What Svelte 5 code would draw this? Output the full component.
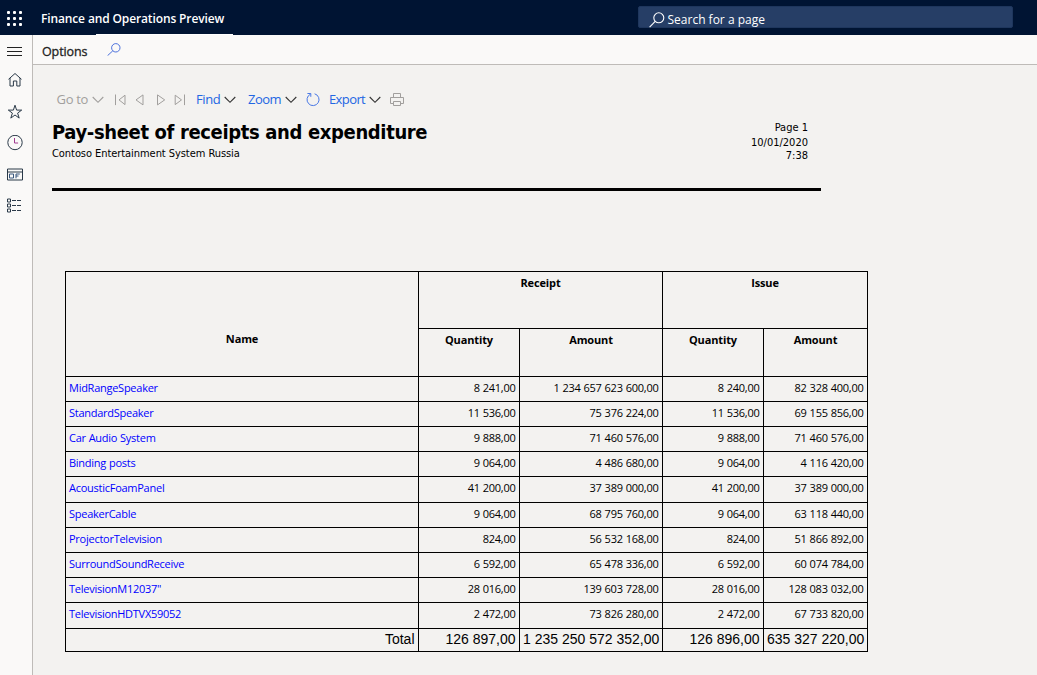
<script>
  const rows = [
    ['MidRangeSpeaker', '8 241,00', '1 234 657 623 600,00', '8 240,00', '82 328 400,00'],
    ['StandardSpeaker', '11 536,00', '75 376 224,00', '11 536,00', '69 155 856,00'],
    ['Car Audio System', '9 888,00', '71 460 576,00', '9 888,00', '71 460 576,00'],
    ['Binding posts', '9 064,00', '4 486 680,00', '9 064,00', '4 116 420,00'],
    ['AcousticFoamPanel', '41 200,00', '37 389 000,00', '41 200,00', '37 389 000,00'],
    ['SpeakerCable', '9 064,00', '68 795 760,00', '9 064,00', '63 118 440,00'],
    ['ProjectorTelevision', '824,00', '56 532 168,00', '824,00', '51 866 892,00'],
    ['SurroundSoundReceive', '6 592,00', '65 478 336,00', '6 592,00', '60 074 784,00'],
    ['TelevisionM12037"', '28 016,00', '139 603 728,00', '28 016,00', '128 083 032,00'],
    ['TelevisionHDTVX59052', '2 472,00', '73 826 280,00', '2 472,00', '67 733 820,00']
  ];
  const totals = ['Total', '126 897,00', '1 235 250 572 352,00', '126 896,00', '635 327 220,00'];
  const dots = [0, 1, 2, 3, 4, 5, 6, 7, 8];
</script>

{#snippet chevron()}
  <svg class="chev" width="12" height="8" viewBox="0 0 12 8"><path d="M.7 1 6 6.3 11.3 1" /></svg>
{/snippet}

<div class="page">
  <header>
    <svg class="waffle" width="15" height="15" viewBox="0 0 15 15">
      {#each dots as d}
        <rect x={(d % 3) * 6} y={Math.floor(d / 3) * 6} width="3" height="3" rx="1" />
      {/each}
    </svg>
    <span class="brand">Finance and Operations Preview</span>
    <div class="search">
      <svg width="16" height="16" viewBox="0 0 16 16"><circle cx="9.8" cy="5.8" r="5" /><path d="M6.2 9.4.6 15.2" /></svg>
      <span>Search for a page</span>
    </div>
  </header>
  <div class="body">
    <nav>
      <svg width="16" height="16" viewBox="0 0 16 16"><path d="M0 4.5h15M0 8.5h15M0 12.5h15" /></svg>
      <svg width="16" height="16" viewBox="0 0 16 16"><path d="M1.5 7.3 8 1.5l6.5 5.8M3 6v8h3.4V9h3.4v5H13V6" /></svg>
      <svg width="16" height="16" viewBox="0 0 16 16"><path d="m8 1.2 1.6 4.9h5.1l-4.1 3 1.6 5L8 11l-4.2 3.1 1.6-5-4.1-3h5.1z" /></svg>
      <svg width="16" height="16" viewBox="0 0 16 16"><circle cx="8" cy="7.5" r="7.2" /><path class="hand" d="M7.5 3v5h3.6" /></svg>
      <svg width="16" height="16" viewBox="0 0 16 16"><path d="M.5 2h15v11H.5zM.5 5h15" /><path class="blue" d="M2.5 7h4v4h-4zM9 11.3V7h3.8M9 9h2.5" /></svg>
      <svg width="16" height="16" viewBox="0 0 16 16"><path d="M.5 1h3v3h-3zM.5 6h3v3h-3zM.5 11h3v3h-3z" /><path stroke-dasharray="4 1" d="M5 2.5h10M5 7.5h10M5 12.5h10" /></svg>
    </nav>
    <main>
      <div class="options">
        <span>Options</span>
        <svg width="14" height="13" viewBox="0 0 14 13"><circle cx="8.8" cy="4.8" r="4.2" /><path d="M5.8 7.8.6 12.6" /></svg>
      </div>
      <div class="toolbar">
        <span class="tool off goto"><b>Go to</b>{@render chevron()}</span>
        <svg class="move first" width="12" height="12" viewBox="0 0 12 12"><path d="M.5.5v10.6M10 1.2v9.4L4 5.9z" /></svg>
        <svg class="move prev" width="10" height="12" viewBox="0 0 10 12"><path d="M8 .9v10L1 5.9z" /></svg>
        <svg class="move next" width="10" height="12" viewBox="0 0 10 12"><path d="M1.5.9v10l7.2-5z" /></svg>
        <svg class="move last" width="12" height="12" viewBox="0 0 12 12"><path d="M10.5.5v10.6M1.2 1.2v9.4l6.3-4.7z" /></svg>
        <span class="tool find"><b>Find</b>{@render chevron()}</span>
        <span class="tool zoom"><b>Zoom</b>{@render chevron()}</span>
        <svg class="refresh" width="14" height="15" viewBox="0 0 14 15"><path d="M8.6 1.8a6 6 0 1 1-4.2.4M1.4 1.5h3.4v3.3" /></svg>
        <span class="tool export"><b>Export</b>{@render chevron()}</span>
        <svg class="print" width="14" height="14" viewBox="0 0 14 14"><path d="M3.5 4.5v-4h7v4M3.5 10.5h-3v-6h13v6h-3M3.5 8.5h7v4h-7z" /></svg>
      </div>
      <section class="head">
        <div>
          <h1>Pay-sheet of receipts and expenditure</h1>
          <p>Contoso Entertainment System Russia</p>
        </div>
        <div class="meta"><span>Page 1</span><span class="date">10/01/2020</span><span>7:38</span></div>
      </section>
      <div class="grid">
        <div class="th name">Name</div>
        <div class="th wide">Receipt</div>
        <div class="th wide">Issue</div>
        <div class="th">Quantity</div>
        <div class="th">Amount</div>
        <div class="th">Quantity</div>
        <div class="th">Amount</div>
        {#each rows as r}
          <div class="td link">{r[0]}</div>
          <div class="td">{r[1]}</div>
          <div class="td">{r[2]}</div>
          <div class="td">{r[3]}</div>
          <div class="td">{r[4]}</div>
        {/each}
        {#each totals as t}
          <div class="td total">{t}</div>
        {/each}
      </div>
    </main>
  </div>
</div>

<style>
  :global(body) { background: #f3f2f1; }
  .page { width: 1037px; height: 675px; display: flex; flex-direction: column; overflow: hidden; font-family: "Open Sans", "Noto Sans", sans-serif; background: #f3f2f0; }
  .page * { box-sizing: border-box; }
  svg { flex: none; display: block; fill: none; }
  header { height: 35px; flex: none; display: flex; align-items: flex-start; background: linear-gradient(#fff, #fff) 96px 34px / 137px 1px no-repeat #001433; color: #fff; }
  .waffle { margin: 11px 0 0 7px; fill: #fff; }
  .brand { padding-left: 19px; line-height: 37px; font-size: 12px; font-weight: 600; letter-spacing: -.13px; white-space: nowrap; }
  .search { width: 375px; height: 22px; margin: 6px 24px 0 auto; border-radius: 2px; background: #263e66; border: 1px solid #1e365d; display: flex; padding-left: 10px; font-size: 12px; white-space: nowrap; }
  .search svg { margin-top: 5px; stroke: #fff; stroke-width: 1.1; }
  .search span { margin-left: 2.5px; line-height: 25px; height: 20px; }
  .body { display: flex; flex: 1; min-height: 0; }
  nav { width: 33px; flex: none; border-right: 1px solid #bebbb8; background: #faf9f8; padding: 8px 0 0 7px; display: flex; flex-direction: column; gap: 15.5px; }
  nav svg { stroke: #2b3a49; stroke-width: 1; }
  nav svg:first-child { margin-bottom: -2.5px; stroke: #222; }
  nav .hand { stroke: #a13a91; }
  nav .blue { stroke: #39577d; }
  main { flex: 1; min-width: 0; }
  .options { height: 30px; background: #faf9f8; border-bottom: 1px solid #bebbb8; display: flex; padding-left: 9px; font-size: 12.5px; color: #222; }
  .options span { width: 65px; line-height: 33px; letter-spacing: -.1px; -webkit-text-stroke: .3px #222; }
  .options svg { margin-top: 8px; stroke: #4b70dc; }
  .toolbar { height: 54px; padding-left: 24px; display: flex; align-items: flex-start; }
  .tool { display: flex; color: #2266e3; font-size: 13px; line-height: 18px; margin-top: 25px; }
  .tool b { font-weight: 400; white-space: nowrap; }
  .chev { margin-top: 6px; stroke: #333; stroke-width: 1.1; }
  .off { color: #a19f9d; }
  .off .chev { stroke: #a19f9d; }
  .goto { width: 58px; } .goto b { width: 35px; letter-spacing: -.3px; margin-left: -.5px; }
  .find { width: 52px; } .find b { width: 27.5px; letter-spacing: -.4px; }
  .zoom { width: 58px; } .zoom b { width: 37px; letter-spacing: -.5px; }
  .export { width: 61px; } .export b { width: 39.5px; letter-spacing: -.6px; }
  .move { margin-top: 29px; stroke: #a19f9d; stroke-width: 1; }
  .first { margin-right: 8px; } .prev { margin-right: 11px; } .next { margin-right: 8px; } .last { margin-right: 10px; }
  .refresh { margin: 27px 9px 0 0; stroke: #4978e5; }
  .print { margin-top: 28px; stroke: #a19f9d; }
  .head { width: 769px; height: 72px; margin-left: 19px; border-bottom: 3px solid #000; display: flex; justify-content: space-between; font-family: "DejaVu Sans Condensed", "DejaVu Sans", sans-serif; font-stretch: condensed; color: #000; }
  h1 { margin: 0; font-size: 20px; line-height: 26px; letter-spacing: -.36px; white-space: nowrap; }
  p { margin: 2px 0 0; font-size: 11px; line-height: 14px; letter-spacing: -.06px; }
  .meta { padding: 2px 13px 0 0; display: flex; flex-direction: column; align-items: flex-end; font-size: 11px; line-height: 13px; }
  .date { line-height: 14px; margin-top: 2px; margin-bottom: -1px; }
  .grid { width: 803px; margin: 80px 0 0 32px; border: solid #000; border-width: 1px 0 0 1px; display: grid; grid-template-columns: 353px 101px 143px 101px 104px; grid-template-rows: 57px 48px repeat(4, 25px) 26px repeat(4, 25px) 26px 23px; font-size: 11px; color: #000; }
  .grid > div { border: solid #000; border-width: 0 1px 1px 0; white-space: nowrap; }
  .th { text-align: center; font-weight: 700; line-height: 15px; padding-top: 3px; letter-spacing: -.13px; }
  .name { grid-row: span 2; padding-top: 59px; }
  .wide { grid-column: span 2; }
  .td { padding: 3px 3.5px 0 3px; text-align: right; line-height: 15px; letter-spacing: -.24px; word-spacing: .3px; }
  .link { text-align: left; color: #00f; letter-spacing: -.26px; }
  .total { font-family: "Liberation Sans", Arial, sans-serif; font-size: 14px; letter-spacing: 0; word-spacing: 0; line-height: 16px; padding-top: 2px; }
</style>
